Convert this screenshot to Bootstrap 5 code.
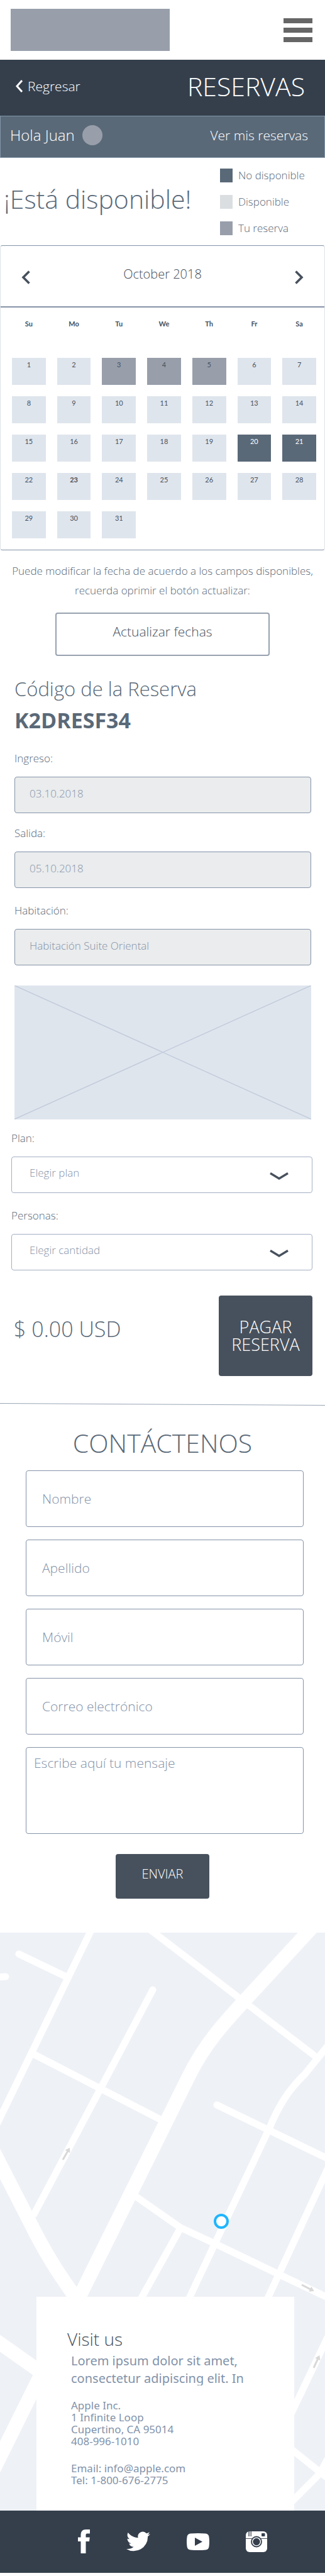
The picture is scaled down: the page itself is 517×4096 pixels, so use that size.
<!DOCTYPE html>
<html lang="es">
<head>
<meta charset="utf-8">
<meta name="viewport" content="width=device-width, initial-scale=1">
<title>Reservas</title>
<link href="https://cdn.jsdelivr.net/npm/bootstrap@5.3.0/dist/css/bootstrap.min.css" rel="stylesheet">
<style>
  :root { --ink: #353f4c; --slate: #5a6978; --steel: #47515d; --line: #8593a8; --mist: #dfe5ed; --ash: #989fab; }
  body { font-family: "Open Sans", "Noto Sans", sans-serif; font-weight: 300; font-size: 17px; line-height: 24px; color: var(--slate); background: #fff; }
  h1, h2, h3, p { margin: 0; font-weight: 300; }
  a { color: inherit; text-decoration: none; }
  .t-display { font-size: 41px; line-height: 56px; }
  .t-title { font-size: 34px; line-height: 50px; }
  .t-sub { font-size: 31px; line-height: 50px; }
  .t-body { font-size: 21px; line-height: 28px; }

  .topbar { height: 95px; padding: 0 20px 0 17px; }
  .brand-box { width: 253px; height: 67px; background: var(--ash); }
  .burger { width: 46px; height: 38px; }
  .titlebar { height: 89px; padding: 0 32px 5px 25px; background: var(--ink); color: #fff; }
  .userbar { height: 67px; padding: 0 26px 6px 15px; background: var(--slate); border: 1px solid #8295a8; color: #fff; }
  .avatar { width: 32px; height: 32px; background: var(--ash); }
  .hola { font-size: 24px; }

  .status { height: 139px; padding: 0 28px 0 6px; }
  .status h2 { padding-bottom: 10px; }
  .legend { gap: 20px; width: 139px; }
  .legend li { gap: 9px; height: 22px; }
  .swatch { width: 20px; height: 22px; background: #dadee1; }
  .swatch.busy { background: var(--slate); }
  .swatch.mine { background: var(--ash); }

  .calendar { border: 1px solid var(--line); border-left-color: #dfe3e8; border-right-color: #dfe3e8; border-radius: 4px; }
  .cal-head { height: 98px; padding: 0 33px; border-bottom: 2px solid var(--line); color: var(--steel); }
  .cal-head h3 { padding-bottom: 6px; font-size: 20px; }
  .cal-body { padding: 0 4px 0 9px; }
  .cal-table { width: 100%; table-layout: fixed; font-family: Lato, sans-serif; font-size: 11px; font-weight: 400; text-align: center; color: var(--steel); }
  .cal-table th { height: 80px; padding: 16px 0 0; vertical-align: top; line-height: 20px; font-weight: 700; }
  .cal-table td { padding: 0 9px 18px; }
  .day { display: block; width: 100%; height: 43px; padding: 0 0 21px; border: 0; background: var(--mist); color: inherit; line-height: 22px; }
  .day.mine { background: var(--ash); }
  .day.busy { background: var(--slate); color: #fff; }

  .note { padding: 17px 6px 20px; line-height: 31px; }
  .btn { --bs-btn-font-weight: 300; --bs-btn-border-radius: 4px; }
  .btn-refresh { width: 66%; height: 69px; padding-bottom: 14px; border: 2px solid #98a1b0; color: var(--steel); font-size: 21px; }
  .btn-solid, .btn-solid:hover { background: var(--steel); color: #fff; border: 0; }
  .btn-pay { width: 149px; height: 128px; font-size: 27px; line-height: 28px; }
  .btn-send { width: 149px; height: 71px; padding-bottom: 12px; font-size: 20px; }

  .booking { padding: 27px 22px 0 23px; }
  .picks { padding: 18px 20px 43px 18px; }
  .picks .tag, .booking .tag { display: block; margin-bottom: 17px; }
  .field { height: 58px; padding: 0 23px 5px; border: 1px solid var(--line); border-radius: 4px; font-size: 17px; font-weight: 300; color: #8593a9; }
  .field::placeholder { color: #8593a9; opacity: 1; }
  .booking .field { background: #eaeced; }
  .picks .field { padding-left: 28px; border-color: #a4b0c4; --bs-form-select-bg-img: url("data:image/svg+xml,%3Csvg xmlns='http://www.w3.org/2000/svg' viewBox='0 0 30 12'%3E%3Cpath fill='none' stroke='%2347515d' stroke-width='3.4' d='M1 1.5 15 10 29 1.5'/%3E%3C/svg%3E"); background-position: right 37px top 24px; background-size: 30px 12px; }
  .photo { display: block; width: 100%; margin-top: 32px; background: var(--mist); }
  .price { padding: 36px 0 0 4px; }
  .slant { display: block; width: 100%; height: 4px; }

  .contact { padding: 31px 0 54px; }
  .contact .stack { gap: 20px; margin: 16px 34px 0 41px; }
  .contact .field { height: 90px; padding: 0 25px; font-size: 21px; }
  .contact textarea.field { height: 138px; padding: 9px 12px; line-height: 30px; resize: none; }

  .visit { position: relative; padding: 579px 49px 0 58px; background: #eef1f6; overflow: hidden; }
  .streets { position: absolute; inset: 0; width: 100%; height: 100%; }
  .visit-box { position: relative; height: 340px; padding: 46px 60px 0 55px; background: #fff; color: #8292a9; font-size: 17px; line-height: 19px; }
  .visit-box p { font-weight: 400; font-family: "Noto Sans", "Open Sans", sans-serif; }
  .visit-box h2 { margin-left: -6px; font-size: 28px; line-height: 42px; color: var(--steel); }
  .visit-box .blurb { height: 53px; overflow: hidden; font-size: 20px; }
  .contact-lines { margin: 22px 0 24px; }
  .social { height: 99px; margin-bottom: 4px; padding: 0 92px 0 124px; background: var(--ink); color: #fff; }
</style>
</head>
<body>
<header class="topbar d-flex align-items-center justify-content-between">
  <a href="#" class="brand-box" aria-label="Inicio"></a>
  <button type="button" class="border-0 bg-transparent p-0 d-flex" aria-label="Menú">
    <svg class="burger" viewBox="0 0 46 38" fill="#666"><path d="M0 0h46v8H0zM0 15h46v8H0zM0 30h46v8H0z"/></svg>
  </button>
</header>

<div class="titlebar d-flex align-items-center justify-content-between">
  <a href="#" class="t-body d-flex align-items-center gap-2">
    <svg width="11" height="20" viewBox="0 0 11 20" fill="none" stroke="#fff" stroke-width="3"><path d="M10 1 2 10l8 9"/></svg>Regresar</a>
  <h1 class="t-display">RESERVAS</h1>
</div>
<div class="userbar d-flex align-items-center justify-content-between">
  <div class="d-flex align-items-center gap-2"><span class="hola">Hola Juan</span><span class="avatar rounded-circle ms-1"></span></div>
  <a href="#" class="t-body">Ver mis reservas</a>
</div>

<main>
  <section class="status d-flex align-items-center justify-content-between">
    <h2 class="t-display text-nowrap">¡Está disponible!</h2>
    <ul class="legend list-unstyled d-flex flex-column m-0 text-nowrap">
      <li class="d-flex align-items-center"><span class="swatch busy"></span>No disponible</li>
      <li class="d-flex align-items-center"><span class="swatch"></span>Disponible</li>
      <li class="d-flex align-items-center"><span class="swatch mine"></span>Tu reserva</li>
    </ul>
  </section>

  <section class="calendar">
    <div class="cal-head d-flex align-items-center justify-content-between">
      <button type="button" class="border-0 bg-transparent p-0 pt-1 d-flex" aria-label="Mes anterior"><svg width="14" height="22" viewBox="0 0 14 22" fill="none" stroke="#47515d" stroke-width="3.6"><path d="M12.5 1.5 3 11l9.500 9.500"/></svg></button>
      <h3 class="t-body">October 2018</h3>
      <button type="button" class="border-0 bg-transparent p-0 pt-1 d-flex" aria-label="Mes siguiente"><svg width="14" height="22" viewBox="0 0 14 22" fill="none" stroke="#47515d" stroke-width="3.6"><path d="M1.500 1.500 11 11l-9.500 9.500"/></svg></button>
    </div>
    <div class="cal-body">
      <table class="cal-table">
        <thead><tr><th>Su</th><th>Mo</th><th>Tu</th><th>We</th><th>Th</th><th>Fr</th><th>Sa</th></tr></thead>
        <tbody>
          <tr><td><button class="day">1</button></td><td><button class="day">2</button></td><td><button class="day mine">3</button></td><td><button class="day mine">4</button></td><td><button class="day mine">5</button></td><td><button class="day">6</button></td><td><button class="day">7</button></td></tr>
          <tr><td><button class="day">8</button></td><td><button class="day">9</button></td><td><button class="day">10</button></td><td><button class="day">11</button></td><td><button class="day">12</button></td><td><button class="day">13</button></td><td><button class="day">14</button></td></tr>
          <tr><td><button class="day">15</button></td><td><button class="day">16</button></td><td><button class="day">17</button></td><td><button class="day">18</button></td><td><button class="day">19</button></td><td><button class="day busy">20</button></td><td><button class="day busy">21</button></td></tr>
          <tr><td><button class="day">22</button></td><td><button class="day fw-bold">23</button></td><td><button class="day">24</button></td><td><button class="day">25</button></td><td><button class="day">26</button></td><td><button class="day">27</button></td><td><button class="day">28</button></td></tr>
          <tr><td><button class="day">29</button></td><td><button class="day">30</button></td><td><button class="day">31</button></td><td></td><td></td><td></td><td></td></tr>
        </tbody>
      </table>
    </div>
  </section>

  <p class="note text-center">Puede modificar la fecha de acuerdo a los campos disponibles, recuerda oprimir el botón actualizar:</p>
  <div class="text-center"><button type="button" class="btn btn-refresh">Actualizar fechas</button></div>

  <form>
    <section class="booking">
      <h2 class="t-sub">Código de la Reserva</h2>
      <p class="t-title fw-bold">K2DRESF34</p>
      <div class="mt-4">
        <label class="tag" for="ingreso">Ingreso:</label>
        <input class="form-control field" id="ingreso" value="03.10.2018" readonly>
      </div>
      <div class="mt-3 pt-1">
        <label class="tag" for="salida">Salida:</label>
        <input class="form-control field" id="salida" value="05.10.2018" readonly>
      </div>
      <div class="mt-4">
        <label class="tag" for="habitacion">Habitación:</label>
        <input class="form-control field" id="habitacion" value="Habitación Suite Oriental" readonly>
      </div>
      <svg class="photo" viewBox="0 0 473 213" fill="none" stroke="#c2cbdb" stroke-width="1.500"><path d="m0 0 473 213M0 213 473 0"/></svg>
    </section>
    <section class="picks">
      <label class="tag" for="plan">Plan:</label>
      <select class="form-select field" id="plan"><option>Elegir plan</option></select>
      <label class="tag mt-4" for="personas">Personas:</label>
      <select class="form-select field" id="personas"><option>Elegir cantidad</option></select>
      <div class="d-flex justify-content-between align-items-start mt-4 pt-3">
        <p class="price t-title lh-1">$ 0.00 USD</p>
        <button type="submit" class="btn btn-solid btn-pay">PAGAR<br>RESERVA</button>
      </div>
    </section>
  </form>
  <svg class="slant" viewBox="0 0 517 4" preserveAspectRatio="none"><path d="M0 .5 517 3.500" stroke="#98a4b4"/></svg>

  <form class="contact">
    <h2 class="t-display text-center">CONTÁCTENOS</h2>
    <div class="stack d-flex flex-column">
      <input class="form-control field" aria-label="Nombre" placeholder="Nombre">
      <input class="form-control field" aria-label="Apellido" placeholder="Apellido">
      <input class="form-control field" type="tel" aria-label="Móvil" placeholder="Móvil">
      <input class="form-control field" type="email" aria-label="Correo electrónico" placeholder="Correo electrónico">
      <textarea class="form-control field" aria-label="Mensaje" placeholder="Escribe aquí tu mensaje"></textarea>
    </div>
    <div class="text-center mt-4 pt-2"><button type="submit" class="btn btn-solid btn-send">ENVIAR</button></div>
  </form>

  <section class="visit">
    <svg class="streets" viewBox="0 0 517 919" preserveAspectRatio="xMidYMin slice" fill="none" stroke="#fff" stroke-width="11" aria-hidden="true">
      <path stroke-linecap="round" d="M30 34 103 69M-9 71 9 70M243 91 54 448M345 274 527 362"/>
      <path d="M148-10-10 315M55 194 257 298M232-10 502 197M527 173 485 225C458 251 443 276 428 312L302 579 270 647M527 363 427 579 395 647M214 418 287 469 343 495 443 543 527 583M287 470 226 579 185 649M527 631 458 776M458 817 527 872M458 911 508 861 525 830"/>
      <path stroke-width="22" d="M500-12 392 105C355 145 325 178 300 229L-10 854M-10 348 51 467C75 515 95 545 130 594M-10 646 68 701"/>
      <g fill="#d8d8d8" stroke="none"><path d="M0-1.500h15v-3l7 4.500-7 4.500v-3H0z" transform="translate(100 361) rotate(-60)"/><path d="M0-1.500h15v-3l7 4.500-7 4.500v-3H0z" transform="translate(480 560) rotate(27)"/><path d="M0-1.500h15v-3l7 4.500-7 4.500v-3H0z" transform="translate(499 692) rotate(-65)"/></g>
      <circle cx="352" cy="459" r="10" fill="#fff" stroke="#20b5ff" stroke-width="4"/>
    </svg>
    <div class="visit-box">
      <h2>Visit us</h2>
      <p class="blurb t-body">Lorem ipsum dolor sit amet, consectetur adipiscing elit. In</p>
      <p class="contact-lines">Apple Inc.<br>1 Infinite Loop<br>Cupertino, CA 95014<br>408-996-1010</p>
      <p class="contact-lines">Email: info@apple.com<br>Tel: 1-800-676-2775</p>
    </div>
  </section>
</main>

<footer class="social d-flex align-items-center justify-content-between">
  <a href="#" aria-label="Facebook"><svg width="19" height="38" viewBox="0 0 19 38" fill="currentColor"><path d="M4.500 38V19H0v-6.500h4.500V9C4.500 3 7.500 0 12.500 0H19v6.500h-4c-2 0-2.500.8-2.500 2.500v3.500h6.300L18 19h-5.500v19z"/></svg></a>
  <a href="#" aria-label="Twitter"><svg width="38" height="32" viewBox="0 2 24 20" fill="currentColor"><path d="M24 4.600a10 10 0 0 1-2.800.8 5 5 0 0 0 2.100-2.700c-1 .6-2 1-3.100 1.200a4.900 4.900 0 0 0-8.400 4.500C7.700 8.200 4.100 6.300 1.700 3.200a4.900 4.900 0 0 0 1.500 6.500 5 5 0 0 1-2.200-.6c0 2.300 1.600 4.400 3.900 4.900a5 5 0 0 1-2.200.1 4.900 4.900 0 0 0 4.600 3.400A9.900 9.900 0 0 1 0 19.500 14 14 0 0 0 21.500 7.100c1-.7 1.800-1.600 2.500-2.500z"/></svg></a>
  <a href="#" aria-label="YouTube"><svg width="36" height="27" viewBox="0 0 36 27"><path fill="currentColor" d="M6 .500q12-1 24 0 5 .5 5.500 5.500 1 7.500 0 15-.5 5-5.500 5.500-12 1-24 0Q1 26 .5 21q-1-7.500 0-15Q1 1 6 .5z"/><path fill="#353f4c" d="m13 7 12 6.500L13 20z"/></svg></a>
  <a href="#" aria-label="Instagram"><svg width="34" height="33" viewBox="0 0 34 33"><rect width="34" height="33" rx="6" fill="currentColor"/><g fill="none" stroke="#353f4c"><path d="M0 11.500h34M4.500 0v8M6.500 0v8M8.500 0v8" stroke-width=".9"/><circle cx="17" cy="16.500" r="8" fill="#fff" stroke-width="1.800"/><circle cx="17" cy="16.500" r="5.200" fill="#353f4c" stroke="#353f4c" stroke-width="1"/></g><rect x="25" y="3" width="5.500" height="5" rx="1" fill="#353f4c"/></svg></a>
</footer>
<script src="https://cdn.jsdelivr.net/npm/bootstrap@5.3.0/dist/js/bootstrap.bundle.min.js"></script>
</body>
</html>
